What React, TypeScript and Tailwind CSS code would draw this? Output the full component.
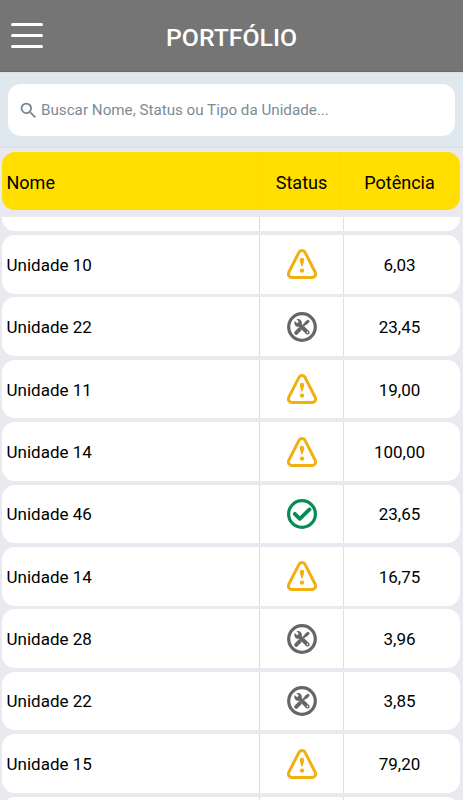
import React from 'react';

type Status = 'alert' | 'maintenance' | 'ok';

interface Unit {
    name: string;
    status: Status;
    power: string;
}

const units: Unit[] = [
    { name: '', status: 'ok', power: '' },
    { name: 'Unidade 10', status: 'alert', power: '6,03' },
    { name: 'Unidade 22', status: 'maintenance', power: '23,45' },
    { name: 'Unidade 11', status: 'alert', power: '19,00' },
    { name: 'Unidade 14', status: 'alert', power: '100,00' },
    { name: 'Unidade 46', status: 'ok', power: '23,65' },
    { name: 'Unidade 14', status: 'alert', power: '16,75' },
    { name: 'Unidade 28', status: 'maintenance', power: '3,96' },
    { name: 'Unidade 22', status: 'maintenance', power: '3,85' },
    { name: 'Unidade 15', status: 'alert', power: '79,20' },
    { name: '', status: 'ok', power: '' },
];

const AlertIcon = () => (
    <svg className="size-[30px]" viewBox="0 0 30 30" fill="none">
        <path
            d="M12.1 3.1 1.8 23.2C.7 25.9 2 28.4 4.7 28.4H25.3C28 28.4 29.3 25.9 28.2 23.2L17.9 3.1C16.6 1 13.4 1 12.1 3.1Z"
            stroke="#f2b010"
            strokeWidth="3"
            strokeLinejoin="round"
        />
        <path d="M12.8 11a2.2 2.2 0 0 1 4.4 0c0 1.6-.8 3-1.5 6.2h-1.4c-.7-3.2-1.5-4.6-1.5-6.2Z" fill="#f2b010" />
        <circle cx="15" cy="21.6" r="2.2" fill="#f2b010" />
    </svg>
);

const MaintenanceIcon = () => (
    <svg className="size-[30px]" viewBox="0 0 30 30" fill="none">
        <circle cx="15" cy="15" r="13.3" stroke="#666" strokeWidth="3.2" />
        {/* screwdriver */}
        <path d="m9.2 20.8 4.6-4.6" stroke="#666" strokeWidth="4" strokeLinecap="round" />
        <path d="m14 16 5.4-5.5" stroke="#666" strokeWidth="2.4" />
        <path d="m17.7 10 3.3-2.6 1.8 1.8-2.6 3.3-1.9.2Z" fill="#666" />
        {/* wrench */}
        <path d="m13.4 13.4 5.8 5.8" stroke="#fff" strokeWidth="4" />
        <path
            d="M7.7 9 10.1 11.2 11.8 9.6 9.5 7.3C12.8 6.4 15.6 9 14.7 12L22 18.9C23.9 21 21.2 23.9 19 22L11.9 14.7C8.7 15.5 6.6 12.3 7.7 9Z"
            fill="#666"
        />
        <circle cx="20.4" cy="20.4" r=".8" fill="#fff" />
    </svg>
);

const OkIcon = () => (
    <svg className="size-[30px]" viewBox="0 0 30 30" fill="none">
        <circle cx="15" cy="15" r="13.4" stroke="#078c55" strokeWidth="3.2" />
        <path d="m7.8 14.8 5 5 9.7-9.4" stroke="#078c55" strokeWidth="3.8" strokeLinecap="round" strokeLinejoin="round" />
    </svg>
);

const StatusIcon = ({ status }: { status: Status }) => {
    if (status === 'alert') {
        return <AlertIcon />;
    }

    if (status === 'maintenance') {
        return <MaintenanceIcon />;
    }

    return <OkIcon />;
};

const UnitRow = ({ unit }: { unit: Unit }) => (
    <div className="grid h-[58.6px] shrink-0 grid-cols-[257px_84px_1fr] rounded-[13px] bg-white text-[17px] text-black">
        <div className="flex items-center pt-[2.4px] pl-[4.5px]">{unit.name}</div>
        <div className="flex items-center justify-center border-l border-[#dcdcdc] pt-[0.2px]">
            <StatusIcon status={unit.status} />
        </div>
        <div className="flex items-center justify-center border-l border-[#e0e0e2] pt-[2.4px] pr-[5px]">{unit.power}</div>
    </div>
);

const App = () => (
    <div className="flex h-[800px] w-[463px] flex-col overflow-hidden bg-[#e9e9ef] font-[Roboto,sans-serif]">
        <header className="relative flex h-[72px] shrink-0 items-center justify-center border-b border-[#6a6a6a] bg-[#757575] pt-[4px]">
            <button type="button" aria-label="Menu" className="absolute top-[23px] left-[11px] flex flex-col gap-2">
                <span className="h-[3px] w-8 rounded-full bg-white" />
                <span className="h-[3px] w-8 rounded-full bg-white" />
                <span className="h-[3px] w-8 rounded-full bg-white" />
            </button>
            <h1 className="text-[24.8px] font-medium text-white">PORTFÓLIO</h1>
        </header>

        <div className="h-[76px] shrink-0 border-y border-[#dde0e3] bg-[#e0e8ef] pt-[11px] pr-[8px] pl-[8px]">
            <label className="flex h-[52px] items-center rounded-[13px] bg-white pl-[10px] text-[#768795]">
                <svg className="mr-[2px] size-[21px] shrink-0" viewBox="0 0 24 24" fill="currentColor">
                    <path d="M15.5 14h-.79l-.28-.27A6.471 6.471 0 0 0 16 9.5 6.5 6.5 0 1 0 9.5 16c1.61 0 3.09-.59 4.23-1.57l.27.28v.79l5 4.99L20.49 19l-4.99-5zm-6 0C7.01 14 5 11.99 5 9.5S7.01 5 9.5 5 14 7.01 14 9.5 11.99 14 9.5 14z" />
                </svg>
                <input
                    type="text"
                    className="w-96 bg-transparent text-[15.2px] outline-none placeholder:text-[#7d8b98]"
                    placeholder="Buscar Nome, Status ou Tipo da Unidade..."
                />
            </label>
        </div>

        <div className="mt-1 mr-[3px] ml-[2px] grid h-[58px] shrink-0 grid-cols-[257px_84px_1fr] rounded-[13px] bg-[#ffde00] text-lg text-black">
            <div className="flex items-center pt-[3px] pl-[4.5px]">Nome</div>
            <div className="flex items-center justify-center border-l border-[#f7da20] pt-[3px]">Status</div>
            <div className="flex items-center justify-center border-l border-[#efd95e] pt-[3px] pr-[5px]">Potência</div>
        </div>

        {/* list is scrolled part way through its first row */}
        <div className="mt-[7px] min-h-0 flex-1 overflow-hidden pr-[3px] pl-[2px]">
            <div className="-mt-[44.4px] flex flex-col gap-[3.8px]">
                {units.map((unit, index) => (
                    <UnitRow key={index} unit={unit} />
                ))}
            </div>
        </div>
    </div>
);

export default App;
